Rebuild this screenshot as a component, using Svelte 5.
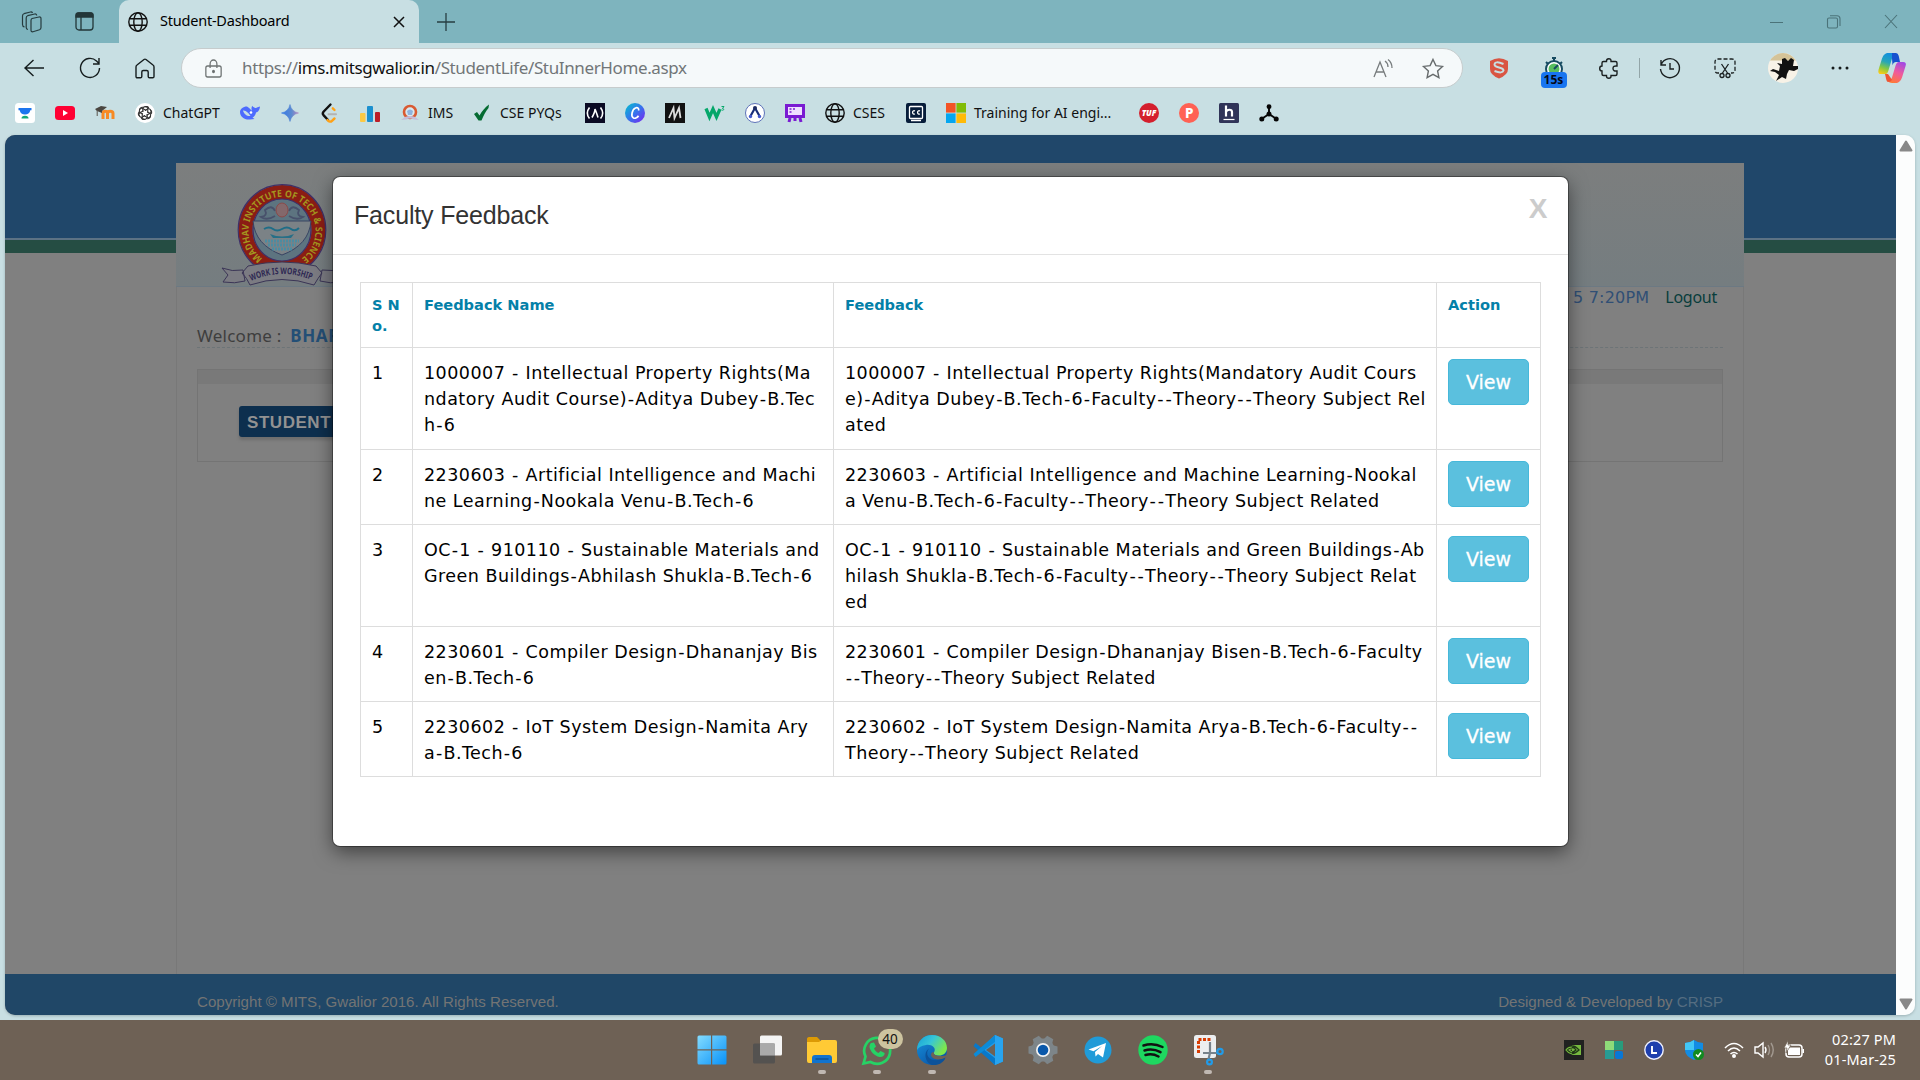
<script>
  const lock = 'M8 12V8a4 4 0 0 1 8 0v4M5 10h14a2 2 0 0 1 2 2v7a2 2 0 0 1-2 2H5a2 2 0 0 1-2-2v-7a2 2 0 0 1 2-2z';
  const bookmarks = [
    { k: 'unstop', w: 40 }, { k: 'youtube', w: 40 }, { k: 'moodle', w: 40 },
    { k: 'chatgpt', w: 105, t: 'ChatGPT' }, { k: 'deepseek', w: 40 }, { k: 'gemini', w: 40 },
    { k: 'leetcode', w: 40 }, { k: 'bars', w: 40 }, { k: 'ims', w: 72, t: 'IMS' },
    { k: 'check', w: 113, t: 'CSE PYQs' }, { k: 'fcc', w: 40 }, { k: 'canva', w: 40 },
    { k: 'mono', w: 40 }, { k: 'w3', w: 40 }, { k: 'algo', w: 40 }, { k: 'board', w: 40 },
    { k: 'globe', w: 81, t: 'CSES' }, { k: 'cc', w: 40 }, { k: 'ms', w: 193, t: 'Training for AI engi...' },
    { k: 'tuf', w: 40 }, { k: 'p', w: 40 }, { k: 'h', w: 40 }, { k: 'graph', w: 40 }
  ];
  const rows = [
    { h: 102, a: ['1000007 - Intellectual Property Rights(Ma', 'ndatory Audit Course)-Aditya Dubey-B.Tec', 'h-6'],
      b: ['1000007 - Intellectual Property Rights(Mandatory Audit Cours', 'e)-Aditya Dubey-B.Tech-6-Faculty--Theory--Theory Subject Rel', 'ated'] },
    { h: 75, a: ['2230603 - Artificial Intelligence and Machi', 'ne Learning-Nookala Venu-B.Tech-6'],
      b: ['2230603 - Artificial Intelligence and Machine Learning-Nookal', 'a Venu-B.Tech-6-Faculty--Theory--Theory Subject Related'] },
    { h: 102, a: ['OC-1 - 910110 - Sustainable Materials and', 'Green Buildings-Abhilash Shukla-B.Tech-6'],
      b: ['OC-1 - 910110 - Sustainable Materials and Green Buildings-Ab', 'hilash Shukla-B.Tech-6-Faculty--Theory--Theory Subject Relat', 'ed'] },
    { h: 75, a: ['2230601 - Compiler Design-Dhananjay Bis', 'en-B.Tech-6'],
      b: ['2230601 - Compiler Design-Dhananjay Bisen-B.Tech-6-Faculty', '--Theory--Theory Subject Related'] },
    { h: 75, a: ['2230602 - IoT System Design-Namita Ary', 'a-B.Tech-6'],
      b: ['2230602 - IoT System Design-Namita Arya-B.Tech-6-Faculty--', 'Theory--Theory Subject Related'] }
  ];
  const apps = ['start', 'tasks', 'files', 'whatsapp', 'edge', 'code', 'settings', 'telegram', 'spotify', 'snip'];
  const running = ['files', 'whatsapp', 'edge', 'snip'];
</script>

{#snippet line(text)}
  <p>{#each text.split('-') as part, i}{#if i}<span class="hy">-</span>{/if}{part}{/each}</p>
{/snippet}

{#snippet globe(size)}
  <svg width={size} height={size} viewBox="0 0 20 20" fill="none" stroke="#111" stroke-width="1.4"><circle cx="10" cy="10" r="9.2"/><ellipse cx="10" cy="10" rx="4.2" ry="9.2"/><path d="M1.5 6.8h17M1.5 13.2h17"/></svg>
{/snippet}

{#snippet mark(k)}
  {#if k === 'globe'}{@render globe(20)}
  {:else}
  <svg width="20" height="20" viewBox="0 0 20 20">
    {#if k === 'unstop'}
      <rect width="20" height="20" rx="3.5" fill="#fff"/><path d="M3.500 5h13v2.200h-1.200c-.6 3-2.500 4.300-5.300 4.300s-4.700-1.300-5.300-4.300H3.500z" fill="#1c75ee"/><path d="M6.500 15.500a3.500 2.800 0 0 1 7 0z" fill="#12a878"/>
    {:else if k === 'youtube'}
      <rect y="3" width="20" height="14" rx="3.500" fill="#ff0033"/><path d="M8 7v6l5-3z" fill="#fff"/>
    {:else if k === 'moodle'}
      <path d="M5.500 16V10.500c0-3 4.500-3 4.500 0V16m0-5.500c0-3 5.500-3 5.500 0V16" transform="translate(2.500 0)" fill="none" stroke="#f78a24" stroke-width="3"/><path d="M0 6l6-3 6 1-5 4v2L2 8z" fill="#4a4640"/><path d="M2.200 7v6" stroke="#5b554d"/>
    {:else if k === 'chatgpt'}
      <circle cx="10" cy="10" r="10" fill="#fff"/><g fill="none" stroke="#333" stroke-width="1.100">{#each [0, 60, 120, 180, 240, 300] as r}<path d="M10 7.500L12.500 6a2.600 2.600 0 0 1 3 4L11.500 12.300M10 3.800a2.600 2.600 0 0 1 3.800 1.500" transform="rotate({r} 10 10)"/>{/each}</g>
    {:else if k === 'deepseek'}
      <path d="M0 9c0-3 3-5.500 7-5.500 2 1 3.500 3 5 4.300-1-2-.3-4 .2-5 1.500 2 3.500 3 5.300 1.500L20 3.500c-.5 4-2 5.500-4 6-.5 2.500-1.500 4-3.500 5l2 1.500-4.500.500C4 17 0 13.500 0 9z" fill="#4d6bfe"/><path d="M3 7.500c3-.5 6 3 7.500 5.500-3.500.5-6.500-2-7.500-5.500z" fill="#c8dfe3"/><circle cx="11" cy="9.500" r="1.300" fill="#fff"/>
    {:else if k === 'gemini'}
      <defs><linearGradient id="gem"><stop stop-color="#3478e6"/><stop offset=".6" stop-color="#5d8bd0"/><stop offset="1" stop-color="#b588be"/></linearGradient></defs><path d="M10 1.500Q11.500 8.500 18.500 10 11.500 11.500 10 18.500 8.500 11.500 1.500 10 8.500 8.500 10 1.500z" fill="url(#gem)" stroke="url(#gem)" stroke-width=".6"/>
    {:else if k === 'leetcode'}
      <g fill="none" stroke-width="2.400" stroke-linecap="round"><path d="M14.500 7l-1.700-1.700" stroke="#ffa116"/><path d="M10.500 1.500L3.500 8.700c-1 1.200-1 2.200 0 3.400L8 17" stroke="#111"/><path d="M7.500 17c1.500 2 3.300 2 4.500.800l2.500-2.300" stroke="#ffa116"/><path d="M8.500 11.300H16" stroke="#b3b3b3" stroke-width="2"/></g>
    {:else if k === 'bars'}
      <rect y="10" width="5.500" height="9" rx="1" fill="#fcc944"/><rect x="7" y="3" width="6" height="16" rx="1" fill="#1c90cf"/><rect x="15" y="9" width="5" height="10" rx="1" fill="#bd1d27"/>
    {:else if k === 'ims'}
      <ellipse cx="10" cy="9" rx="6" ry="6" fill="#d8e8ef" stroke="#d95a32" stroke-width="2.600"/><path d="M7 8c2-2 4-2 6 0l-1 4H8z" fill="#8fb3df"/><path d="M1 17l4-3q5-2 10 0l4 3-5-.5q-4-2-8 0z" fill="#c3bddc"/>
    {:else if k === 'check'}
      <path d="M2 11l3-2 2.500 3.500C10 8 13 4.500 17 1.500l-.5 3.500C13.500 8.500 11.500 12.500 9.500 17.500H6.500z" fill="#056b32"/>
    {:else if k === 'fcc'}
      <rect width="20" height="20" fill="#0a0a23"/><path d="M4.500 4.500c-3 4-3 7.500 0 11M15.500 4.500c3 4 3 7.500 0 11M7 14.500c2-3.500 3-6 3-8.500 1 2.500 2 5 3 8.500" fill="none" stroke="#fff" stroke-width="1.600"/>
    {:else if k === 'canva'}
      <defs><linearGradient id="cnv" x1="0" y1="0" x2="1" y2="1"><stop stop-color="#00c4cc"/><stop offset=".5" stop-color="#3674ed"/><stop offset="1" stop-color="#8020f0"/></linearGradient></defs><circle cx="10" cy="10" r="10" fill="url(#cnv)"/><path d="M13.500 7.500c.8-2-1-3.500-3-2.500C7 6.500 5.500 13.500 8.500 15c1.800.8 4-.5 5-2.200" fill="none" stroke="#fff" stroke-width="1.700"/>
    {:else if k === 'mono'}
      <rect width="20" height="20" fill="#111"/><path d="M4 15L8.500 5l1 10L14 5l1.500 10" fill="none" stroke="#ddd" stroke-width="1.800"/>
    {:else if k === 'w3'}
      <path d="M1 5.500l3.500 8.500L8 6l3.500 8L15 6" fill="none" stroke="#05a76a" stroke-width="3.300"/><path d="M16.500 3.500H19l-1.500 2c2 0 1.500 2.500-1 1.500" fill="none" stroke="#05a76a" stroke-width="1"/>
    {:else if k === 'algo'}
      <circle cx="10" cy="10" r="9.500" fill="#fff" stroke="#5e72b8"/><path d="M10 5L5.500 13M10 5l4.500 8" stroke="#182d78" stroke-width="2.200"/><circle cx="10" cy="5" r="2" fill="#1d2b64"/><circle cx="5.500" cy="13.500" r="1.700" fill="#445acf"/><circle cx="14.500" cy="13.500" r="1.700" fill="#445acf"/>
    {:else if k === 'board'}
      <rect x="1.500" y="2.500" width="17" height="11" fill="#f0dfff" stroke="#7a1bd2" stroke-width="3"/><path d="M5 15l-1 4M15 15l1 4M10 14v4" stroke="#7a1bd2" stroke-width="3"/><path d="M4.500 6h2M8 6h2M4.500 9h2" stroke="#7a1bd2" stroke-width="1.500"/>
    {:else if k === 'cc'}
      <rect width="20" height="20" rx="2" fill="#071d3a"/><rect x="3.500" y="3.500" width="13" height="12" rx="1" fill="none" stroke="#fff" stroke-width="1.300"/><path d="M9 8c-3-1.500-3.500 4 0 3M14 8c-3-1.500-3.500 4 0 3M5 17.500h10" fill="none" stroke="#fff" stroke-width="1.300"/>
    {:else if k === 'ms'}
      <path fill="#f35325" d="M0 0h9.600v9.600H0z"/><path fill="#81bc06" d="M10.400 0H20v9.600h-9.600z"/><path fill="#05a6f0" d="M0 10.400h9.600V20H0z"/><path fill="#ffba08" d="M10.400 10.400H20V20h-9.600z"/>
    {:else if k === 'tuf'}
      <circle cx="10" cy="10" r="10" fill="#d41f2d"/><text x="10" y="12.800" text-anchor="middle" font-size="8" font-weight="900" font-style="italic" fill="#fff">TUF</text>
    {:else if k === 'p'}
      <circle cx="10" cy="10" r="10" fill="#ff6154"/><text x="10.300" y="14.800" text-anchor="middle" font-size="13.500" font-weight="800" fill="#fff">P</text>
    {:else if k === 'h'}
      <rect width="20" height="20" rx="1.500" fill="#303458"/><path d="M7 2.500v11M7 9c1-3 6-3 6 0v4.500" fill="none" stroke="#fff" stroke-width="2.200"/><path d="M4.500 16.500h11" stroke="#fff" stroke-width="1.200"/>
    {:else if k === 'graph'}
      <path d="M10 3v8L2.500 16M10 11l7.500 5" fill="none" stroke="#050505" stroke-width="1.900"/><g fill="#050505"><circle cx="10" cy="3.700" r="2.400"/><circle cx="10" cy="11" r="2.500"/><circle cx="2.800" cy="16" r="2.500"/><circle cx="17.200" cy="16" r="2.500"/></g>
    {/if}
  </svg>
  {/if}
{/snippet}

{#snippet app(k)}
  <svg width="30" height="30" viewBox="0 0 30 30">
    {#if k === 'start'}
      <defs><linearGradient id="win" x1="0" y1="0" x2="1" y2="1"><stop stop-color="#84dcff"/><stop offset="1" stop-color="#0791f8"/></linearGradient></defs><path d="M2 .5h12v13.800H.500V2A1.500 1.500 0 0 1 2 .500zM15.200.500H28A1.500 1.500 0 0 1 29.500 2v12.300H15.200zM.500 15.500H14v14H2A1.500 1.500 0 0 1 .500 28zM15.200 15.500h14.300V28a1.500 1.500 0 0 1-1.500 1.500H15.200z" fill="url(#win)"/>
    {:else if k === 'tasks'}
      <rect x="8" y=".5" width="22" height="20" rx="1.500" fill="#f4f4f4"/><rect x="1" y="8.500" width="22" height="20" rx="1.500" fill="#505050" opacity=".85"/><path d="M8 8.500h15v12H8z" fill="#aaa"/>
    {:else if k === 'files'}
      <path d="M0 3.500A2 2 0 0 1 2 2h8l3 3v7H0z" fill="#dc9a05"/><path d="M0 7h12l2.500-2H28a2 2 0 0 1 2 2v19a2 2 0 0 1-2 2H2a2 2 0 0 1-2-2z" fill="#ffca35"/><path d="M5 28v-5a3 3 0 0 1 3-3h14a3 3 0 0 1 3 3v5z" fill="#1173cd"/><path d="M8.500 24h13" stroke="#07427c"/>
    {:else if k === 'whatsapp'}
      <path d="M1.500 28.500l2-7A13 13 0 1 1 8.500 27z" fill="none" stroke="#26d265" stroke-width="2.700"/><path d="M9 8l3-.5 2 4-2 2c1 2.200 2.500 3.500 4.500 4.500l2-2 4.200 2c0 3-2.700 4.500-5.200 4C12.500 21 8 16 7.500 12c0-1.500.5-3 1.500-4z" fill="#26d265"/>
    {:else if k === 'edge'}
      <defs><linearGradient id="eg" x1="0" y1="0" x2="1" y2=".5"><stop stop-color="#169fd7"/><stop offset=".5" stop-color="#36c5d8"/><stop offset="1" stop-color="#7ee84b"/></linearGradient><linearGradient id="eb" x1="0" x2=".8" y2="1"><stop stop-color="#1893dd"/><stop offset="1" stop-color="#0750a3"/></linearGradient></defs><circle cx="15" cy="15" r="15" fill="url(#eb)"/><path d="M0 15C0 6 7 0 15 0c9 0 15 6 15 13 0 5-4 7.500-8 7.500s-6-1.500-5-3c3-5-3-8.500-8-7.500-5 .8-8 3-9 5z" fill="url(#eg)"/><path d="M12 13.500c-5 6 1 13.500 9 11.500 3-.5 5-2 7.500-4l-.5 3c-3 5-8 6.500-13 6-7-2-9-13-3-16.500z" fill="#0d5299"/><path d="M17 17.500c-1 3 5 4.500 11 3l3-1v2l-2.500 1c-5 3-12 2.500-14-1-1-2 0-5 2.500-4z" fill="#6e6155"/>
    {:else if k === 'code'}
      <path d="M22 0l8 3.500v23L22 30 7 15z" fill="#209cea"/><path d="M22 8.500v13L13 15z" fill="#6e6155"/><path d="M2.500 8L23 24l-1 6L.500 11z" fill="#0878c9"/><path d="M2.500 22L23 6l-1-6L.500 19z" fill="#0b8bd9"/><path d="M22 0l8 3.500v23L22 30z" fill="#28a4ef"/>
    {:else if k === 'settings'}
      <g fill="#7d8589"><circle cx="15" cy="15" r="11.500"/>{#each [0, 60, 120, 180, 240, 300] as r}<path d="M10 6L11.500.5h7L20 6z" transform="rotate({r + 30} 15 15)"/>{/each}</g><circle cx="15" cy="15" r="7" fill="#f3f3f3"/><circle cx="15" cy="15" r="5.300" fill="#0958aa"/>
    {:else if k === 'telegram'}
      <circle cx="15" cy="15" r="13.500" fill="#209bd8"/><path d="M5.500 14.500L23 8l-3 14.500-5-3.500-2.500 2.500-.5-4.500 7-6-8.500 5.200z" fill="#fff"/>
    {:else if k === 'spotify'}
      <circle cx="15" cy="15" r="14.700" fill="#1ed760"/><path d="M5.500 10.500c6-2 13-1.500 19 1.500M6.500 15.500c5-1.500 11-1 16 1.700M7.500 20c4-1.200 9-.8 13 1.500" fill="none" stroke="#111" stroke-width="2.500" stroke-linecap="round"/>
    {:else}
      <rect x="1" y="0" width="22" height="23" rx="2.500" fill="#eceef0"/><path d="M5.500 18V4.500h12" fill="none" stroke="#d83b01" stroke-width="3" stroke-dasharray="3 1.500"/><path d="M17 7v11h7M17 18l-2 8M10 18h7" fill="none" stroke="#77828b" stroke-width="2.200"/><circle cx="27" cy="16.500" r="2.700" fill="none" stroke="#229be8" stroke-width="2.200"/><circle cx="16.500" cy="27" r="2.400" fill="none" stroke="#229be8" stroke-width="2.200"/>
    {/if}
  </svg>
{/snippet}

<div class="screen">
  <header class="tabs">
    <svg class="ws" width="22" height="22" viewBox="0 0 22 22" fill="none" stroke="#263b3e" stroke-width="1.200"><path d="M11 7.500l7-1.500q2-.3 2 1.700v8.800q0 1.700-1.500 2.200l-6.500 2q-2 .5-2-1.500V9.500q0-1.600 1-2zM7 18.500q-1.800-.2-1.800-2V7q0-1.800 1.500-2.300l7-1.700q1.800-.3 2 1.500M3.500 16Q1.500 15.500 1.500 13.500V5q0-1.800 1.500-2.300L9.500 1q1.500-.3 2 1"/></svg>
    <svg class="vt" width="19" height="19" viewBox="0 0 19 19" fill="none" stroke="#233638" stroke-width="1.300"><rect x="1" y="1" width="17" height="17" rx="3"/><path d="M1 5V3q0-2 2-2h13q2 0 2 2v2z" fill="#233638"/><path d="M6 5v13"/></svg>
    <div class="tab">{@render globe(20)}<span>Student-Dashboard</span><svg width="12" height="12" viewBox="0 0 12 12" stroke="#111" stroke-width="1.500"><path d="M1 1l10 10M11 1L1 11"/></svg></div>
    <svg class="plus" width="18" height="18" viewBox="0 0 18 18" stroke="#273e42" stroke-width="1.300"><path d="M9 0v18M0 9h18"/></svg>
    <div class="wins"><svg width="127" height="14" viewBox="0 0 127 14" fill="none" stroke="#4b7379" stroke-width="1.100"><path d="M0 7.500h13M115 0l12 13M127 0l-12 13"/><rect x="57.500" y="3" width="10" height="10" rx="1.500"/><path d="M60 .8h7q3 0 3 3V11"/></svg></div>
  </header>

  <div class="tools">
    <svg class="back" width="21" height="18" viewBox="0 0 21 18" fill="none" stroke="#151d1e" stroke-width="1.400"><path d="M20 9H1M9.500 1L1 9l8.500 8"/></svg>
    <svg class="reload" width="22" height="22" viewBox="0 0 22 22" fill="none" stroke="#151d1e" stroke-width="1.400"><path d="M20.500 11A9.500 9.500 0 1 1 17.500 4L20 6.500M20 1v6h-6"/></svg>
    <svg class="home" width="20" height="21" viewBox="0 0 20 21" fill="none" stroke="#151d1e" stroke-width="1.400"><path d="M1 9q0-1.300 1-2l7-5.500q1-.8 2 0L18 7q1 .7 1 2v9.500q0 1.300-1.300 1.300h-3.200q-1.300 0-1.300-1.300V14q0-1.500-1.500-1.500H8.300Q6.800 12.500 6.800 14v4.500q0 1.300-1.300 1.300H2.300Q1 19.800 1 18.500z"/></svg>
    <div class="address">
      <svg width="17" height="20" viewBox="2 2 20 20" preserveAspectRatio="none" fill="none" stroke="#6e7373" stroke-width="1.500"><path d={lock}/><circle cx="12" cy="15.500" r="1" fill="#555"/></svg>
      <span class="url">https://<b>ims.mitsgwalior.in</b>/StudentLife/StuInnerHome.aspx</span>
      <svg width="20" height="19" viewBox="0 0 20 19" fill="none" stroke="#777c7d" stroke-width="1.300"><path d="M1 18L7 3l6 15M3 13h8M12 2q3 2 3 6M15 .500q4 3 4 8.500"/></svg>
      <svg class="star" width="22" height="21" viewBox="0 0 22 21" fill="none" stroke="#666b6c" stroke-width="1.400"><path d="M11 1.500l2.900 6.100 6.600.8-4.900 4.600 1.300 6.600L11 16.300l-5.900 3.300L6.400 13 1.500 8.400l6.600-.8z"/></svg>
    </div>
    <div class="ext">
      <svg width="20" height="21" viewBox="0 0 20 21"><path d="M1 3Q10-2.500 19 3v8q0 6-9 9.500Q1 17 1 11z" fill="#d95543"/><path d="M14.500 6Q6 2.500 5.500 6.500q0 2 4.500 3t4.500 3q-1 3.500-9 .500" fill="none" stroke="#c8dfe3" stroke-width="2"/></svg>
      <span class="timer"><svg width="22" height="15" viewBox="0 0 22 15"><circle cx="11" cy="12" r="8" fill="#fff" stroke="#174b61" stroke-width="2"/><circle cx="11" cy="12" r="5.500" fill="#58bd5d"/><path d="M9 1h4M11 1v3M3 5l2 2M19 5l-2 2M11 12l4-4" stroke="#174b61" stroke-width="2"/></svg><i>15s</i></span>
      <svg width="20" height="21" viewBox="0 0 20 21" fill="none" stroke="#1a2021" stroke-width="1.400"><path d="M4.500 3.500H7.500V3q0-2.200 2.300-2.200T12 3v.500h4.500q1.500 0 1.500 1.500v3q-4-.5-4 2.500t4 2.500v3q0 1.500-1.500 1.500H12v.800q0 2-2.200 2t-2.300-2V17.500H4.500q-1.500 0-1.500-1.500v-3q-2.300 0-2.300-2.500T3 8V5q0-1.500 1.500-1.500z"/></svg>
      <span class="rule"></span>
      <svg width="22" height="22" viewBox="0 0 22 22" fill="none" stroke="#1a2021" stroke-width="1.400"><path d="M2 3v5h5M2.200 7.500A9.500 9.500 0 1 1 1.500 12M11 6v6h4"/></svg>
      <svg width="22" height="21" viewBox="0 0 22 21" fill="none" stroke="#1a2021" stroke-width="1.300"><path d="M5 15H4q-3 0-3-3V4q0-3 3-3h14q3 0 3 3v8q0 3-3 3h-1" stroke-dasharray="4 2"/><path d="M7.500 6l6 9M14.500 6l-6 9"/><circle cx="8" cy="17.500" r="2"/><circle cx="14" cy="17.500" r="2"/></svg>
      <svg width="30" height="30" viewBox="0 0 30 30"><circle cx="15" cy="15" r="15" fill="#f7f2e7"/><path d="M2 7.500Q7 0 15 0t13 7.500z" fill="#d4c398"/><path d="M14 6l3-1 3 3 3-3 3 2-1 6h5v3l-4 2-5-1-2 4-1 5-4-2-6 4 3-6-4-3-5-1 3-2 6 2 1-5-3-3 5 1z" fill="#111"/></svg>
      <svg width="18" height="4" viewBox="0 0 18 4" fill="#161b1c"><circle cx="2" cy="2" r="1.500"/><circle cx="9" cy="2" r="1.500"/><circle cx="16" cy="2" r="1.500"/></svg>
      <svg width="28" height="30" viewBox="0 0 28 27" preserveAspectRatio="none"><defs><linearGradient id="ca" x1=".5" y1="0" x2=".2" y2="1"><stop stop-color="#138fdd"/><stop offset=".4" stop-color="#26a6b9"/><stop offset=".7" stop-color="#84c943"/><stop offset="1" stop-color="#ffcb15"/></linearGradient><linearGradient id="cb" x1=".7" y1="0" x2=".3" y2="1"><stop stop-color="#a44ae2"/><stop offset=".5" stop-color="#f05b9b"/><stop offset="1" stop-color="#ff7938"/></linearGradient></defs><path d="M7 1Q5 2 4 5L.500 15Q-.5 19 3 19h4q2.500 0 3.500-3.500L14 5q1-3 4-3-1-2-4-2H9z" fill="url(#ca)"/><path d="M14 0h4q2 0 2.700 2.500L22 8h-4q-2.500 0-3.500 3L14 5z" fill="#1652cf"/><path d="M21 26q2-1 3-4l3.500-10Q29 8 25 8h-4q-2.500 0-3.500 3.500L14 22q-1 3-4 3 1 2 4 2h5z" fill="url(#cb)"/><path d="M7 19h3l4 5q-1 2-4 2-1 0-1.700-2z" fill="#ee5535"/></svg>
    </div>
  </div>

  <nav class="marks">
    {#each bookmarks as b}
      <div class="bm" style="width:{b.w}px">{@render mark(b.k)}{#if b.t}<span>{b.t}</span>{/if}</div>
    {/each}
  </nav>

  <section class="frame">
    <main class="site">
      <div class="band"></div>
      <div class="green"></div>
      <div class="wrap">
        <div class="banner">
          <svg width="123" height="123" viewBox="0 0 123 123">
            <ellipse cx="61" cy="67" rx="30" ry="32" fill="#5d7480"/>
            <ellipse cx="61" cy="67" rx="36.500" ry="38" fill="none" stroke="#8b1d14" stroke-width="14"/>
            <ellipse cx="61" cy="67" rx="43.800" ry="45.300" fill="none" stroke="#3f3068" stroke-width="1.200"/>
            <ellipse cx="61" cy="67" rx="29" ry="31" fill="none" stroke="#3f3068" stroke-width="1.200"/>
            <path d="M32 58h58q-2 24-29 34Q34 82 32 58z" fill="#7b8286" stroke="#394463"/>
            <path d="M43 66q5-3 9 0t9 0 9 0 8-1" fill="none" stroke="#1f6d87" stroke-width="2"/><path d="M49 71q12 5 24 0l-3 4H52z" fill="#266f87"/>
            <path d="M44 78h34M47 82h28M51 86h20" stroke="#4c8ca1" stroke-width="3" stroke-dasharray="2 1"/>
            <path d="M54 53q-8 5-14 1 7-1 4-7 7-6 10 1M68 53q8 5 14 1-7-1-4-7-7-6-10 1" fill="none" stroke="#48516b" stroke-width="1.800"/><ellipse cx="61" cy="47" rx="6" ry="7" fill="#84686b" stroke="#8b4a49"/>
            <defs><path id="arc" d="M41.500 95.500A33.500 34 0 1 1 80.500 95.500"/><path id="rib" d="M30 118q31-14 63 0"/></defs>
            <text font-size="9.500" font-weight="700" fill="#a3961f"><textPath href="#arc" textLength="170" lengthAdjust="spacingAndGlyphs">MADHAV INSTITUTE OF TECH &amp; SCIENCE</textPath></text>
            <path d="M1 105q10 4 21 2l2 11q-10 3-22 1l5-7zM122 105q-10 4-21 2l-2 11q10 3 22 1l-5-7zM27 103q34-8 68 0l6 7q-4 5-8 12-32-11-64 0-3-7-8-12z" fill="#7b7b82" stroke="#3b3556"/>
            <text font-size="9" font-weight="700" fill="#2e2852"><textPath href="#rib" textLength="62" lengthAdjust="spacingAndGlyphs">WORK IS WORSHIP</textPath></text>
          </svg>
        </div>
        <div class="body">
          <div class="login"><span>5 7:20PM</span><b>Logout</b></div>
          <div class="welcome">Welcome : <b>BHAR</b></div>
          <div class="panel"><div class="phead"></div><div class="student">STUDENT</div></div>
        </div>
      </div>
      <footer><span>Copyright © MITS, Gwalior 2016. All Rights Reserved.</span><span>Designed &amp; Developed by <i>CRISP</i></span></footer>
      <div class="modal">
        <div class="mhead"><h4>Faculty Feedback</h4><b>X</b></div>
        <div class="grid">
          <div class="tr th"><div>S N<br>o.</div><div>Feedback Name</div><div>Feedback</div><div>Action</div></div>
          {#each rows as r, i}
            <div class="tr" style="height:{r.h}px">
              <div>{i + 1}</div>
              <div>{#each r.a as l}{@render line(l)}{/each}</div>
              <div>{#each r.b as l}{@render line(l)}{/each}</div>
              <div><button>View</button></div>
            </div>
          {/each}
        </div>
      </div>
    </main>
    <div class="scroll"><svg width="14" height="12" viewBox="0 0 14 12"><path d="M7 1.500L12.500 10.500h-11z" fill="#888" stroke="#888" stroke-width="2" stroke-linejoin="round"/></svg><svg width="14" height="12" viewBox="0 0 14 12"><path d="M7 10.500L12.500 1.500h-11z" fill="#888" stroke="#888" stroke-width="2" stroke-linejoin="round"/></svg></div>
  </section>

  <div class="taskbar">
    <div class="apps">
      {#each apps as a}
        <div class="app">{@render app(a)}{#if a === 'whatsapp'}<span class="badge">40</span>{/if}<i class:on={running.includes(a)}></i></div>
      {/each}
    </div>
    <div class="tray">
      <svg width="20" height="20" viewBox="0 0 20 20"><path d="M0 0h20v20H0z" fill="#202120"/><path d="M8 5h9v10H8z" fill="#76b83f"/><path d="M2 10q6-8 13 0-7 7-13 0zm3 0q4-5 7 0-4 4-7 0z" fill="none" stroke="#203717" stroke-width="1.300"/><path d="M8 7Q4 7 2 10q2 3 6 4M8 9q-2 0-3 1l3 2" fill="none" stroke="#76b83f" stroke-width="1.200"/></svg>
      <svg width="20" height="20" viewBox="0 0 20 20"><path d="M1 1h9v9H1z" fill="#8edb79"/><path d="M10 1h9v9h-9z" fill="#299b7c"/><path d="M1 10h9v9H1z" fill="#269b93"/><rect x="11" y="11" width="8" height="8" rx="2" fill="#0877d6"/></svg>
      <svg width="20" height="20" viewBox="0 0 20 20"><circle cx="10" cy="10" r="9.200" fill="#1e3fad" stroke="#eef0ff" stroke-width="1.400"/><path d="M8 6v7h5" fill="none" stroke="#fff" stroke-width="1.900"/></svg>
      <svg width="20" height="20" viewBox="0 0 20 20"><path d="M1 3q5 0 9-3 4 3 9 3v7q0 6-9 10-9-4-9-10z" fill="#128ce4"/><path d="M1 3q5 0 9-3v10H1z" fill="#42c7f6"/><circle cx="14.500" cy="14.500" r="5.500" fill="#118a20"/><path d="M12 14.500l2 2 3-4" fill="none" stroke="#fff" stroke-width="1.500"/></svg>
      <svg width="20" height="16" viewBox="0 0 20 16" fill="none" stroke="#fff" stroke-width="1.600"><path d="M1 6q9-9 18 0M4 9q6-6 12 0M6.500 12q3.500-3 7 0"/><circle cx="10" cy="14" r="1.200" fill="#fff"/></svg>
      <svg width="20" height="18" viewBox="0 0 20 18" fill="none" stroke="#fff" stroke-width="1.400"><path d="M1 6h3l5-4v14l-5-4H1zM11 6q2 3 0 6"/><path d="M14 4q3 5 0 10M17 2q4.500 7 0 14" stroke="#a29990"/></svg>
      <svg width="21" height="18" viewBox="0 0 21 18"><rect x="2" y="4" width="16" height="12" rx="3" fill="none" stroke="#fff" stroke-width="1.500"/><path d="M4 6.500h12v7.500H4zM18.500 8H20v4h-1.500z" fill="#fff"/><path d="M4-.5L0 7h3l-1 5 5-8H4z" fill="#fff" stroke="#6e6155" stroke-width=".7"/></svg>
      <div class="clock"><span>02:27 PM</span><span>01-Mar-25</span></div>
    </div>
  </div>
</div>

<style>
  :global(body) { margin: 0; overflow: hidden; }
  .screen, .screen * { box-sizing: border-box; }
  .screen { width: 1920px; height: 1080px; display: flex; flex-direction: column; background: #c8dfe3; font-family: "Noto Sans", sans-serif; overflow: hidden; }
  svg { display: block; flex: none; overflow: visible; }
  i { font-style: normal; }
  .tabs { height: 43px; flex: none; display: flex; align-items: center; background: #7eb4be; }
  .ws { margin-left: 21px; }
  .vt { margin-left: 32px; margin-right: 25px; }
  .tab { width: 300px; height: 43px; border-radius: 10px 10px 0 0; background: #c8dfe3; display: flex; align-items: center; padding: 0 14px 0 9px; font-size: 14.500px; }
  .tab span { margin-left: 12px; padding-bottom: 3px; flex: 1; letter-spacing: -.22px; white-space: nowrap; }
  .plus { margin-left: 18px; }
  .wins { margin-left: auto; padding-right: 23px; }
  .tools { height: 50px; flex: none; display: flex; align-items: center; }
  .back { margin-left: 24px; }
  .reload { margin-left: 34px; }
  .home { margin-left: 34px; margin-right: 26px; }
  .address { width: 1282px; height: 40px; flex: none; border: 1px solid #c6cccd; border-radius: 20px; background: #f5f9fa; display: flex; align-items: center; padding: 0 18px 0 23px; }
  .url { margin-left: 20px; padding-bottom: 2px; flex: 1; font-size: 17px; color: #717678; letter-spacing: -.37px; white-space: nowrap; }
  .url b { color: #111; font-weight: 400; }
  .star { margin-left: 29px; }
  .ext { margin-left: 8px; height: 50px; display: grid; grid-template-columns: 55px 55px 55px 7px 53px 57px 60px 53px 52px; align-items: center; justify-items: center; }
  .timer { width: 26px; height: 34px; padding-top: 6px; display: flex; flex-direction: column; align-items: center; }
  .timer i { width: 26px; height: 16px; flex: none; border-radius: 4px; background: #1875f0; font-size: 12px; font-weight: 700; line-height: 16px; text-align: center; color: #050b18; z-index: 1; }
  .rule { width: 1px; height: 20px; background: #92a5a8; }
  .marks { height: 42px; flex: none; display: flex; align-items: center; padding: 0 0 2px 15px; font-size: 14px; color: #111; }
  .bm { height: 20px; display: flex; align-items: center; flex: none; white-space: nowrap; }
  .bm span { margin-left: 8px; padding-bottom: 2px; letter-spacing: 0; }
  .frame { width: 1910px; height: 880px; margin-left: 5px; flex: none; display: flex; border-radius: 10px; overflow: hidden; box-shadow: 0 1px 3px #9aafb3; }
  .site { width: 1891px; height: 880px; background: #808080; position: relative; display: flex; flex-direction: column; }
  .band { height: 105px; flex: none; background: #20476a; border-bottom: 2px solid #5c7284; }
  .green { height: 13px; flex: none; background: #254d43; }
  .wrap { width: 1568px; height: 811px; flex: none; margin: -90px 0 0 171px; display: flex; flex-direction: column; }
  .banner { height: 124px; flex: none; background: linear-gradient(#7c7e7e, #757d80); border-bottom: 1px solid #6c7983; padding-left: 45px; display: flex; align-items: flex-start; }
  .body { flex: 1; border: solid #787878; border-width: 0 1px; padding: 0 20px; font-family: "DejaVu Sans", sans-serif; font-size: 16px; }
  .login { height: 22px; display: flex; justify-content: flex-end; color: #304f75; padding-right: 6px; line-height: 21px; }
  .login span { letter-spacing: .2px; }
  .login b { color: #083d3c; font-weight: 400; margin-left: 16px; font-family: "Noto Sans", sans-serif; letter-spacing: -.25px; }
  .welcome { height: 39px; padding-top: 14px; line-height: 25px; border-bottom: 1px dashed #6d7477; color: #3e3e3e; font-family: "Noto Sans", sans-serif; font-size: 17px; letter-spacing: .25px; }
  .welcome b { color: #244f76; margin-left: 4px; letter-spacing: .6px; }
  .panel { height: 93px; margin-top: 21px; border: 1px solid #747474; }
  .phead { height: 14px; background: #797979; }
  .student { width: 180px; height: 31px; margin: 22px 0 0 41px; border-radius: 3px; background: #0d2f4e; color: #929292; font: 700 17px/33px "Liberation Sans", sans-serif; padding-left: 8px; box-shadow: 0 3px 3px #6d6d6d; letter-spacing: .55px; }
  footer { height: 41px; flex: none; background: #204767; padding: 14px 173px 0 192px; display: flex; justify-content: space-between; font: 15.100px/27px "Liberation Sans", sans-serif; color: #737474; white-space: nowrap; }
  footer i { color: #546d81; }
  .modal { position: absolute; left: 328px; top: 42px; width: 1235px; height: 669px; border-radius: 7px; background: #fff; box-shadow: 0 6px 19px rgba(0, 0, 0, .5), 0 0 0 1px rgba(0, 0, 0, .35); }
  .mhead { height: 78px; border-bottom: 1px solid #e3e3e3; display: flex; justify-content: space-between; padding: 0 20.500px 0 21px; }
  h4 { margin: 22px 0 0; font: 400 25px/32px "Liberation Sans", sans-serif; color: #333; letter-spacing: -.17px; }
  .mhead b { font: 700 28px/32px "Liberation Sans", sans-serif; color: #ccc; margin-top: 16px; }
  .grid { width: 1181px; margin: 27px 0 0 27px; border: solid #ddd; border-width: 1px 0 0 1px; font: 17.500px/26.200px "DejaVu Sans", sans-serif; color: #000; }
  .tr { display: grid; grid-template-columns: 52px 421px 603px 104px; }
  .tr > div { border: solid #ddd; border-width: 0 1px 1px 0; padding: 12px 11px 0; white-space: nowrap; letter-spacing: .48px; }
  .th { height: 65px; font: 700 14.600px/21px "DejaVu Sans", sans-serif; color: #0480a8; }
  .th > div { letter-spacing: 0; padding-top: 11px; }
  p { margin: 0; }
  .hy { padding: 0 .7px; }
  button { display: block; width: 81px; height: 46px; margin-top: -1px; padding: 0; border: 1px solid #46b8da; border-radius: 5px; background: #5bc0de; color: #fff; font: 19px/45px "DejaVu Sans", sans-serif; -webkit-text-stroke: .3px #fff; }
  .scroll { width: 19px; background: #fcfdfd; display: flex; flex-direction: column; justify-content: space-between; align-items: center; padding: 5px 0; }
  .taskbar { height: 60px; margin-top: 5px; flex: none; background: #6e6155; display: flex; justify-content: space-between; }
  .apps { margin-left: 684px; display: flex; }
  .app { width: 55.200px; height: 60px; display: flex; flex-direction: column; align-items: center; padding-top: 15px; position: relative; }
  .app > i { width: 8px; height: 4px; border-radius: 2px; margin-top: 5px; }
  .app > i.on { background: #c0b8b2; }
  .badge { position: absolute; left: 28px; top: 9px; width: 25px; height: 20px; border-radius: 10px; background: #cdc39f; color: #111; font-size: 13.500px; line-height: 20px; text-align: center; }
  .tray { display: flex; align-items: center; padding-right: 24px; gap: 20px; }
  .tray > svg:nth-of-type(n + 6) { margin-left: -10px; }
  .clock { display: flex; flex-direction: column; align-items: flex-end; padding-bottom: 2px; font-size: 14.500px; line-height: 20px; color: #fff; letter-spacing: .15px; white-space: nowrap; }
</style>
